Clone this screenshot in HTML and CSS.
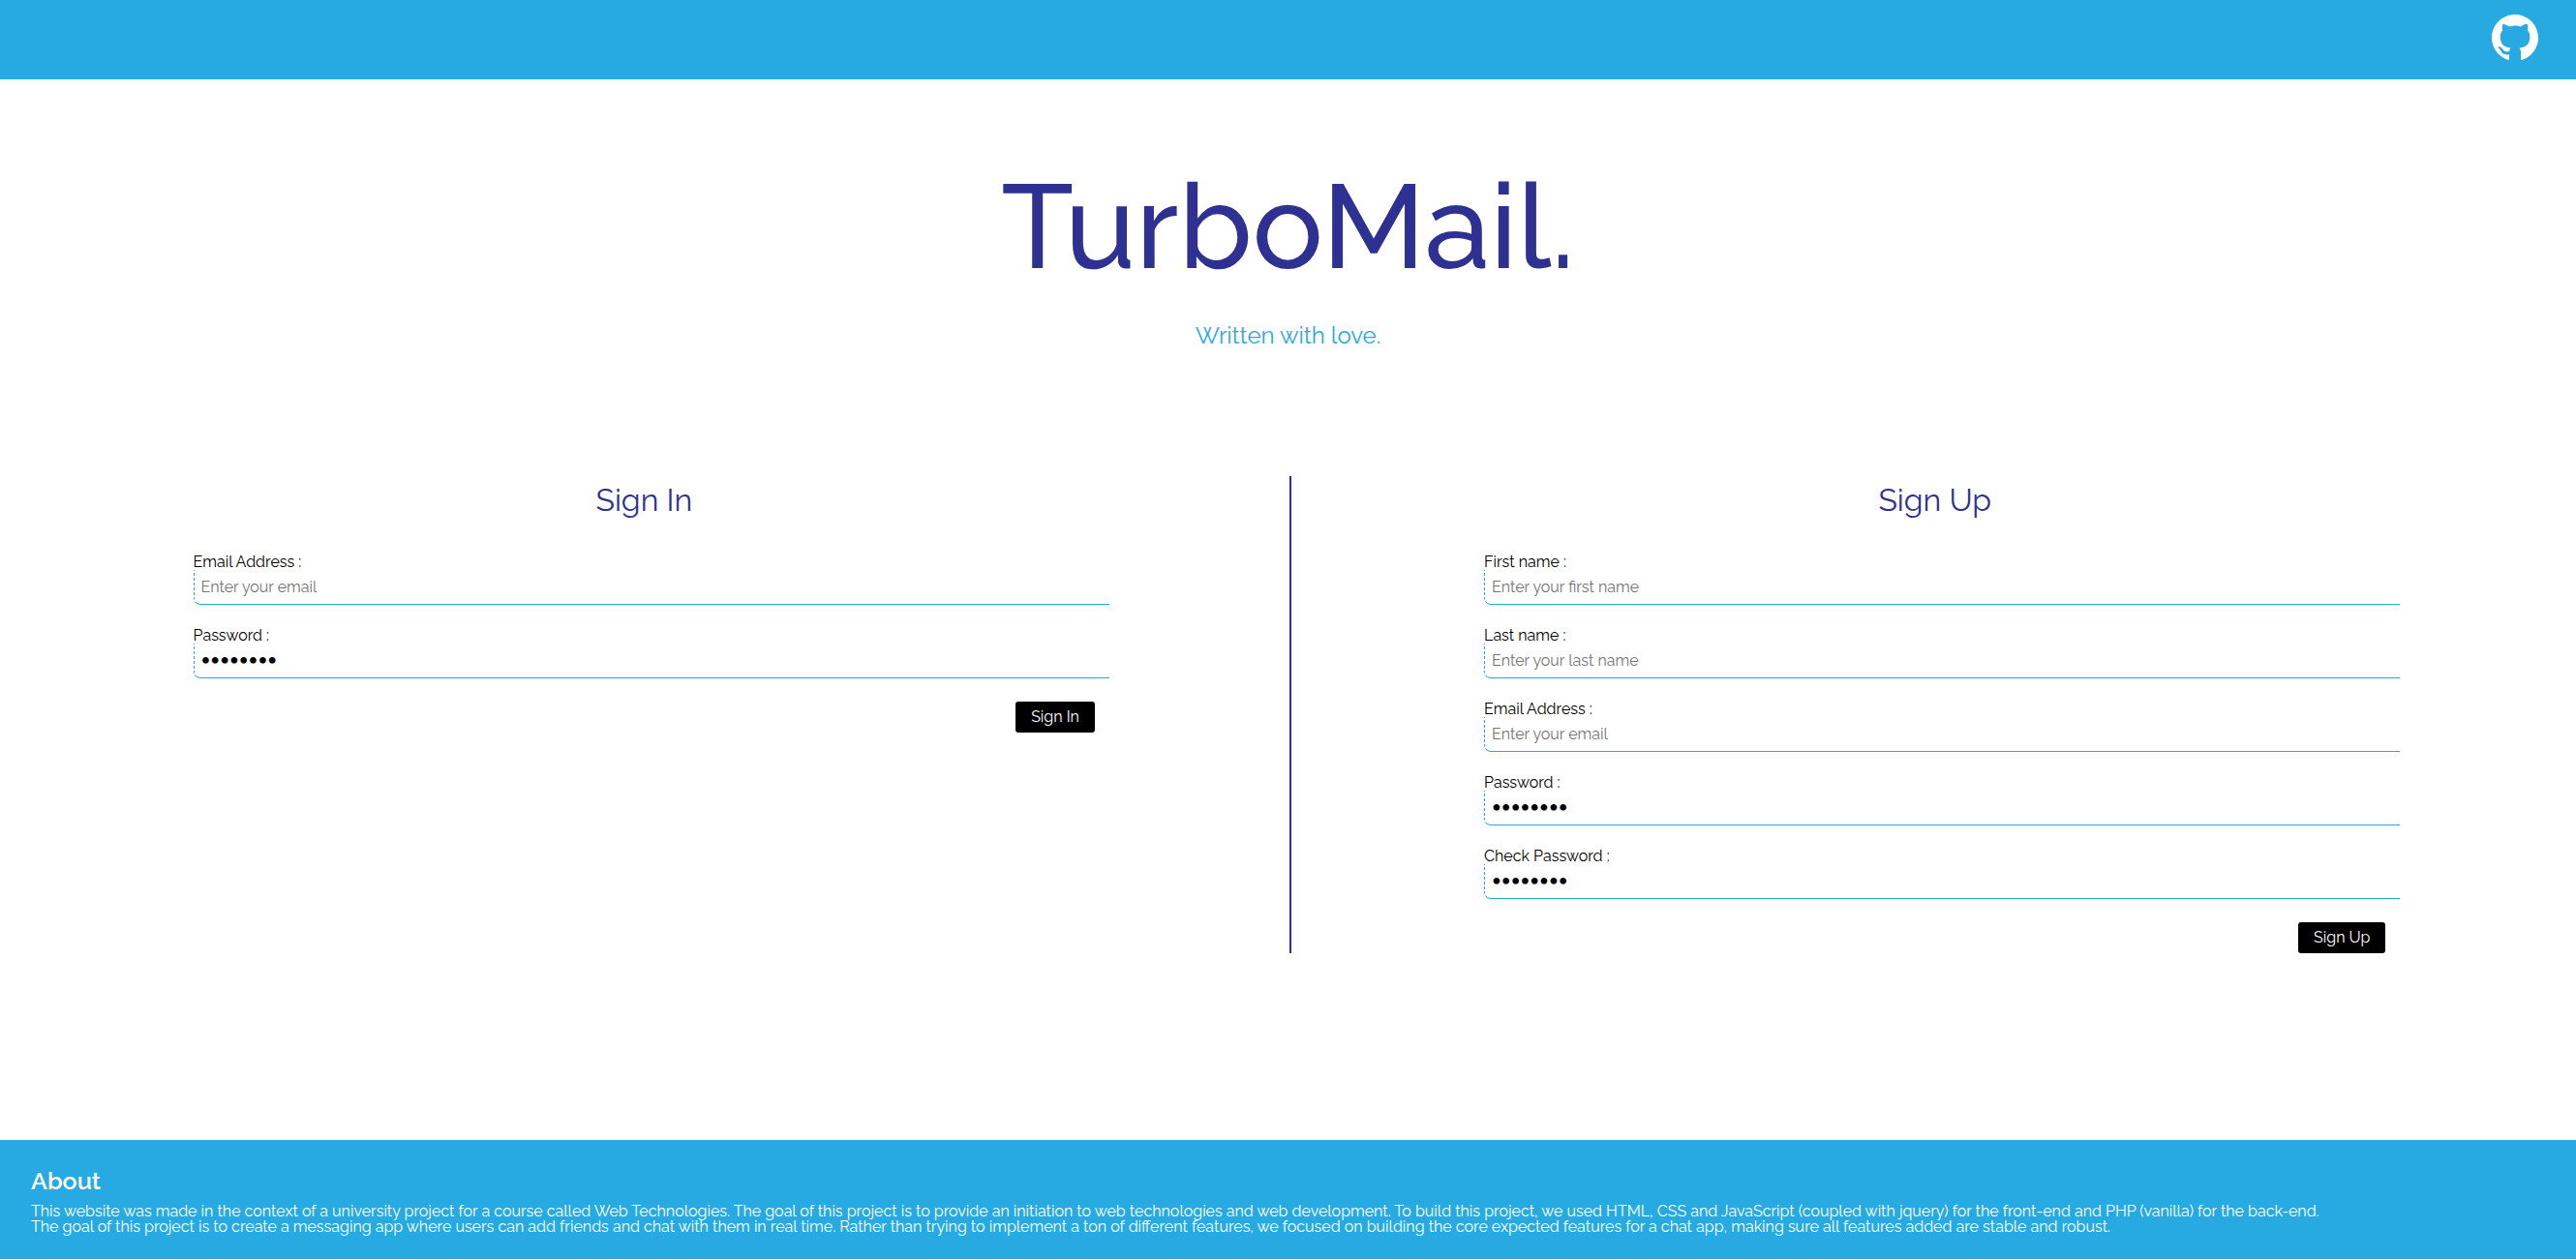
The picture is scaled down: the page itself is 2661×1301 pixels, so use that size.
FILE: index.html
```html
<!DOCTYPE html>
<html lang="en">
<head>
<meta charset="utf-8">
<meta name="viewport" content="width=device-width, initial-scale=1">
<title>TurboMail</title>
<link rel="stylesheet" href="styles.css">
</head>
<body>
<header class="topbar">
  <a class="github" href="#" aria-label="GitHub">
    <svg viewBox="0 0 16 16" aria-hidden="true"><path fill="currentColor" fill-rule="evenodd" d="M8 0C3.58 0 0 3.58 0 8c0 3.54 2.29 6.53 5.47 7.59.4.07.55-.17.55-.38 0-.19-.01-.82-.01-1.49-2.01.37-2.53-.49-2.69-.94-.09-.23-.48-.94-.82-1.13-.28-.15-.68-.52-.01-.53.63-.01 1.08.58 1.23.82.72 1.21 1.87.87 2.33.66.07-.52.28-.87.51-1.07-1.78-.2-3.64-.89-3.64-3.95 0-.87.31-1.59.82-2.15-.08-.2-.36-1.02.08-2.12 0 0 .67-.21 2.2.82.64-.18 1.32-.27 2-.27s1.36.09 2 .27c1.53-1.04 2.2-.82 2.2-.82.44 1.1.16 1.92.08 2.12.51.56.82 1.27.82 2.15 0 3.07-1.87 3.75-3.65 3.95.29.25.54.73.54 1.48 0 1.07-.01 1.93-.01 2.2 0 .21.15.46.55.38A8.01 8.01 0 0 0 16 8c0-4.42-3.58-8-8-8z"/></svg>
  </a>
</header>
<main class="main">
  <h1 class="title">TurboMail.</h1>
  <p class="tagline">Written with love.</p>
  <div class="forms">
    <form class="panel">
      <h2 class="heading">Sign In</h2>
      <div class="field"><label for="in-email">Email Address :</label><input id="in-email" type="email" placeholder="Enter your email"></div>
      <div class="field"><label for="in-pass">Password :</label><input id="in-pass" type="password" value="password"></div>
      <button class="submit" type="button">Sign In</button>
    </form>
    <form class="panel panel-up">
      <h2 class="heading">Sign Up</h2>
      <div class="field"><label for="first">First name :</label><input id="first" type="text" placeholder="Enter your first name"></div>
      <div class="field"><label for="last">Last name :</label><input id="last" type="text" placeholder="Enter your last name"></div>
      <div class="field"><label for="up-email">Email Address :</label><input id="up-email" type="email" placeholder="Enter your email"></div>
      <div class="field"><label for="up-pass">Password :</label><input id="up-pass" type="password" value="password"></div>
      <div class="field"><label for="check">Check Password :</label><input id="check" type="password" value="password"></div>
      <button class="submit" type="button">Sign Up</button>
    </form>
  </div>
</main>
<footer class="footer">
  <h2 class="about">About</h2>
  <p>This website was made in the context of a university project for a course called Web Technologies. The goal of this project is to provide an initiation to web technologies and web development. To build this project, we used HTML, CSS and JavaScript (coupled with jquery) for the front-end and PHP (vanilla) for the back-end.</p>
  <p>The goal of this project is to create a messaging app where users can add friends and chat with them in real time. Rather than trying to implement a ton of different features, we focused on building the core expected features for a chat app, making sure all features added are stable and robust.</p>
</footer>
</body>
</html>
```
FILE: styles.css
```css
* {
  box-sizing: border-box;
  margin: 0;
  padding: 0;
}

body {
  display: flex;
  flex-direction: column;
  min-height: 100vh;
  font: 16px/1 Raleway, Lato, sans-serif;
  color: #000;
  background: #fff;
}

.topbar {
  display: flex;
  justify-content: flex-end;
  padding: 15px 39px 19px;
  background: #27aae1;
}

.github {
  color: #fff;
}

.github svg {
  display: block;
  width: 48px;
  height: 48px;
}

.main {
  flex: 1;
  padding: 91px 0 64px;
}

.title {
  font-size: 122px;
  font-weight: 500;
  text-align: center;
  color: #2e3192;
}

.tagline {
  margin-top: 40px;
  font-size: 24px;
  text-align: center;
  color: #27aae1;
}

.forms {
  display: grid;
  grid-template-columns: 1fr 1fr;
  margin-top: 133px;
}

.panel {
  display: flex;
  flex-direction: column;
  padding: 9px 15% 0;
}

.panel-up {
  margin-left: 1px;
  padding-right: calc(15% - 3px);
  border-left: 2px solid #2e3192;
}

.heading {
  margin-bottom: 40px;
  font-size: 32px;
  font-weight: 400;
  text-align: center;
  color: #2e3192;
}

.field {
  display: flex;
  flex-direction: column;
  margin: 0 -15px 24px 0;
}

.field input {
  height: 36px;
  padding: 0 7px;
  border: 0;
  border-left: 1px dashed #27aae1;
  border-bottom: 1px solid #27aae1;
  border-bottom-left-radius: 7px;
  outline: 0;
  font: inherit;
  color: inherit;
  background: none;
}

.field input[type="password"] {
  font-family: "Liberation Serif", serif;
  font-size: 28px;
}

.submit {
  align-self: flex-end;
  height: 32px;
  padding: 0 16px;
  border: 0;
  border-radius: 3px;
  font: inherit;
  color: #fff;
  background: #000;
}

.footer {
  padding: 30px 32px 25px;
  color: #fff;
  background: #27aae1;
}

.about {
  margin-bottom: 11px;
  font-size: 25px;
  font-weight: 600;
}
```
